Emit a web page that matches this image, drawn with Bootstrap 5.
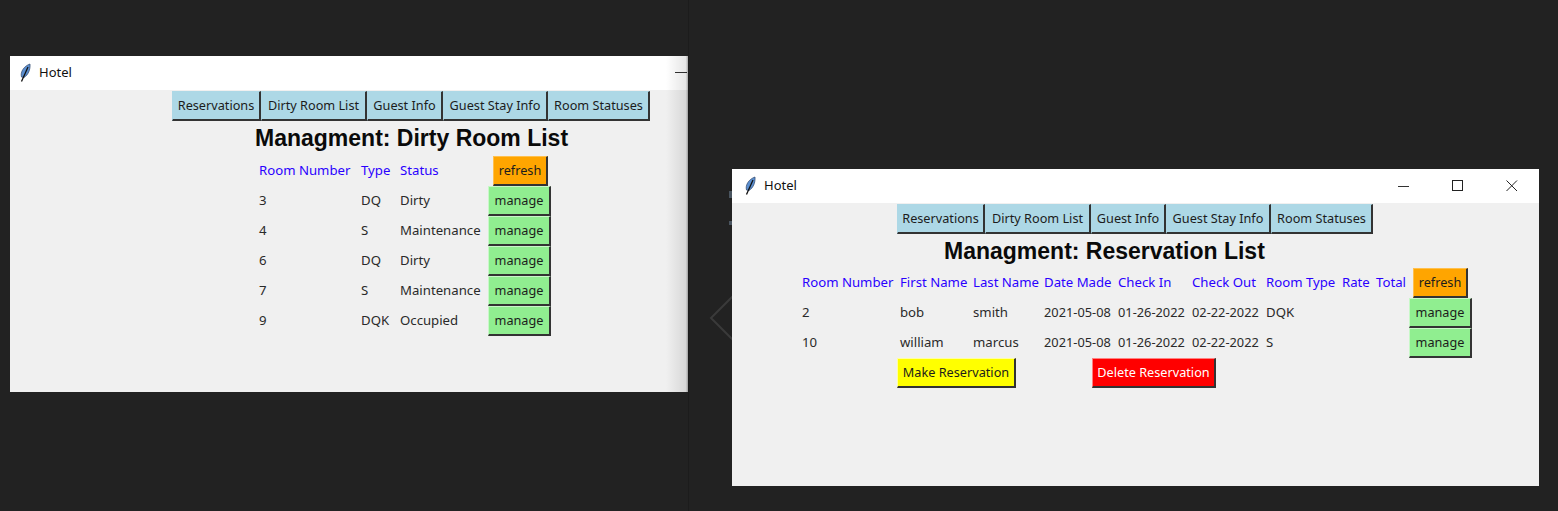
<!DOCTYPE html>
<html lang="en">
<head>
  <meta charset="UTF-8">
  <title>Hotel</title>
  <link rel="stylesheet" href="https://cdn.jsdelivr.net/npm/bootstrap@5.3.0/dist/css/bootstrap.min.css">
  <style>
    html, body { height: 100%; }
    body { background: #222222; overflow: hidden; font-family: "Noto Sans", "Open Sans", sans-serif; font-size: 13.2px; color: #2a2a2a; }
    .desk { position: relative; width: 1558px; height: 511px; }
    .desk-seam { position: absolute; left: 688px; top: 0; width: 1px; height: 511px; background: #1c1c1c; }
    .desk-chevron { position: absolute; left: 708px; top: 294px; }
    .desk-mark { position: absolute; left: 729px; width: 3px; height: 7px; background: #4a5560; }
    .mark-a { top: 191px; }
    .mark-b { top: 221px; height: 4px; }
    .tk-win { position: absolute; background: #f0f0f0; overflow: hidden; }
    .win-one { left: 10px; top: 56px; width: 678px; height: 336px; }
    .win-two { left: 732px; top: 169px; width: 807px; height: 317px; }
    .win-fade { position: absolute; right: 0; top: 0; bottom: 0; width: 22px; background: linear-gradient(to right, rgba(0,0,0,0), rgba(0,0,0,.1) 90%, rgba(0,0,0,.35)); }
    .win-bar { height: 34px; background: #fff; padding-left: 9px; font-size: 13px; color: #111; }
    .two-bar { padding-left: 12px; }
    .win-bar svg.feather { margin-right: 8px; }
    .bar-controls { margin-left: auto; }
    .bar-ctl { width: 54px; height: 34px; }
    .min-clip { position: absolute; left: 665px; top: 16px; width: 12px; height: 1px; background: #333; }
    .win-body { padding-top: 1px; }
    .one-body { padding-left: 162px; }
    .two-body { padding-left: 70px; }
    .tk-btn { height: 30px; padding: 0 0 2px; border-radius: 0; font-size: 12.7px; line-height: 24px; color: #1c1c1c; border-style: solid; border-width: 1px 2px 2px 1px; border-color: #e6e6e6 #333 #333 #e6e6e6; white-space: nowrap; }
    .btn-nav { background: #add8e6; border-color: #add8e6 #333 #333 #add8e6; }
    .btn-nav:hover { background: #add8e6; }
    .nav-res { width: 89px; }
    .nav-dirty { width: 106px; }
    .nav-guest { width: 76px; }
    .nav-stay { width: 105px; }
    .nav-status { width: 102px; }
    .two-nav .nav-res { width: 88px; }
    .two-nav .nav-guest { width: 75px; }
    .btn-refresh { background: #ffa500; width: 55px; border-color: #ffc04d #333 #333 #ffc04d; }
    .btn-manage { background: #90ee90; width: 63px; border-color: #c8f8c8 #333 #333 #c8f8c8; }
    .btn-make { background: #ffff00; width: 119px; border-color: #ffffa0 #333 #333 #ffffa0; }
    .btn-delete { background: #ff0000; width: 124px; color: #fff; border-color: #ff8080 #333 #333 #ff8080; }
    .tk-title { font-family: "Liberation Sans", Arial, sans-serif; font-weight: 700; font-size: 23px; color: #0a0a0a; margin: 0; white-space: nowrap; }
    .one-title { margin-left: 83px; line-height: 35px; }
    .two-nav { margin-left: 95px; }
    .two-title { margin-left: 142px; line-height: 34px; }
    .tk-grid { display: grid; grid-auto-rows: 30px; align-items: center; white-space: nowrap; }
    .one-grid { margin-left: 87px; grid-template-columns: 102px 39px 88px 63px; }
    .two-grid { grid-template-columns: 98px 73px 71px 74px 74px 74px 76px 34px 33px 62px; }
    .head-cell { color: #2a00ff; }
    .date-cell { font-size: 12.8px; }
    .one-grid .btn-refresh { justify-self: start; margin-left: 5px; }
    .two-grid .btn-refresh { justify-self: start; margin-left: 4px; }
    .two-actions { margin-left: 95px; gap: 76px; }
  </style>
</head>
<body>
  <div class="desk">
    <div class="desk-seam"></div>
    <svg class="desk-chevron" width="26" height="48" viewBox="0 0 26 48"><path d="M25 2 L3 24 L25 46" fill="none" stroke="#3a3a3a" stroke-width="2"/></svg>
    <div class="desk-mark mark-a"></div>
    <div class="desk-mark mark-b"></div>

    <!-- Dirty room list window -->
    <div class="tk-win win-one">
      <div class="win-bar d-flex align-items-center">
        <svg class="feather" width="12" height="20" viewBox="0 0 12 20"><path d="M2.5 14 C1 9 5 3 11 1 C11.5 7 9 12 5 14.5 Z" fill="#5b8fd0" stroke="#2c4468" stroke-width=".7"/><path d="M9 4 L2.5 18.5" stroke="#111" stroke-width="1.3"/></svg>
        <span>Hotel</span>
      </div>
      <div class="min-clip"></div>
      <div class="win-body one-body">
        <div class="d-flex">
          <button class="btn tk-btn btn-nav nav-res">Reservations</button>
          <button class="btn tk-btn btn-nav nav-dirty">Dirty Room List</button>
          <button class="btn tk-btn btn-nav nav-guest">Guest Info</button>
          <button class="btn tk-btn btn-nav nav-stay">Guest Stay Info</button>
          <button class="btn tk-btn btn-nav nav-status">Room Statuses</button>
        </div>
        <h1 class="tk-title one-title">Managment: Dirty Room List</h1>
        <div class="tk-grid one-grid">
          <div class="head-cell">Room Number</div><div class="head-cell">Type</div><div class="head-cell">Status</div>
          <button class="btn tk-btn btn-refresh">refresh</button>
          <div>3</div><div>DQ</div><div>Dirty</div><button class="btn tk-btn btn-manage">manage</button>
          <div>4</div><div>S</div><div>Maintenance</div><button class="btn tk-btn btn-manage">manage</button>
          <div>6</div><div>DQ</div><div>Dirty</div><button class="btn tk-btn btn-manage">manage</button>
          <div>7</div><div>S</div><div>Maintenance</div><button class="btn tk-btn btn-manage">manage</button>
          <div>9</div><div>DQK</div><div>Occupied</div><button class="btn tk-btn btn-manage">manage</button>
        </div>
      </div>
      <div class="win-fade"></div>
    </div>

    <!-- Reservation list window -->
    <div class="tk-win win-two">
      <div class="win-bar two-bar d-flex align-items-center">
        <svg class="feather" width="12" height="20" viewBox="0 0 12 20"><path d="M2.5 14 C1 9 5 3 11 1 C11.5 7 9 12 5 14.5 Z" fill="#5b8fd0" stroke="#2c4468" stroke-width=".7"/><path d="M9 4 L2.5 18.5" stroke="#111" stroke-width="1.3"/></svg>
        <span>Hotel</span>
        <div class="bar-controls d-flex">
          <div class="bar-ctl d-flex align-items-center justify-content-center"><svg width="12" height="12" viewBox="0 0 12 12"><path d="M0 6.5 H11" stroke="#333" stroke-width="1"/></svg></div>
          <div class="bar-ctl d-flex align-items-center justify-content-center"><svg width="12" height="12" viewBox="0 0 12 12"><rect x=".5" y=".5" width="10" height="10" fill="none" stroke="#222" stroke-width="1"/></svg></div>
          <div class="bar-ctl d-flex align-items-center justify-content-center"><svg width="12" height="12" viewBox="0 0 12 12"><path d="M.5 .5 L11 11 M11 .5 L.5 11" stroke="#222" stroke-width="1"/></svg></div>
        </div>
      </div>
      <div class="win-body two-body">
        <div class="d-flex two-nav">
          <button class="btn tk-btn btn-nav nav-res">Reservations</button>
          <button class="btn tk-btn btn-nav nav-dirty">Dirty Room List</button>
          <button class="btn tk-btn btn-nav nav-guest">Guest Info</button>
          <button class="btn tk-btn btn-nav nav-stay">Guest Stay Info</button>
          <button class="btn tk-btn btn-nav nav-status">Room Statuses</button>
        </div>
        <h1 class="tk-title two-title">Managment: Reservation List</h1>
        <div class="tk-grid two-grid">
          <div class="head-cell">Room Number</div><div class="head-cell">First Name</div><div class="head-cell">Last Name</div><div class="head-cell">Date Made</div><div class="head-cell">Check In</div><div class="head-cell">Check Out</div><div class="head-cell">Room Type</div><div class="head-cell">Rate</div><div class="head-cell">Total</div>
          <button class="btn tk-btn btn-refresh">refresh</button>
          <div>2</div><div>bob</div><div>smith</div><div class="date-cell">2021-05-08</div><div class="date-cell">01-26-2022</div><div class="date-cell">02-22-2022</div><div>DQK</div><div></div><div></div><button class="btn tk-btn btn-manage">manage</button>
          <div>10</div><div>william</div><div>marcus</div><div class="date-cell">2021-05-08</div><div class="date-cell">01-26-2022</div><div class="date-cell">02-22-2022</div><div>S</div><div></div><div></div><button class="btn tk-btn btn-manage">manage</button>
        </div>
        <div class="d-flex two-actions">
          <button class="btn tk-btn btn-make">Make Reservation</button>
          <button class="btn tk-btn btn-delete">Delete Reservation</button>
        </div>
      </div>
    </div>
  </div>
  <script src="https://cdn.jsdelivr.net/npm/bootstrap@5.3.0/dist/js/bootstrap.bundle.min.js"></script>
</body>
</html>
